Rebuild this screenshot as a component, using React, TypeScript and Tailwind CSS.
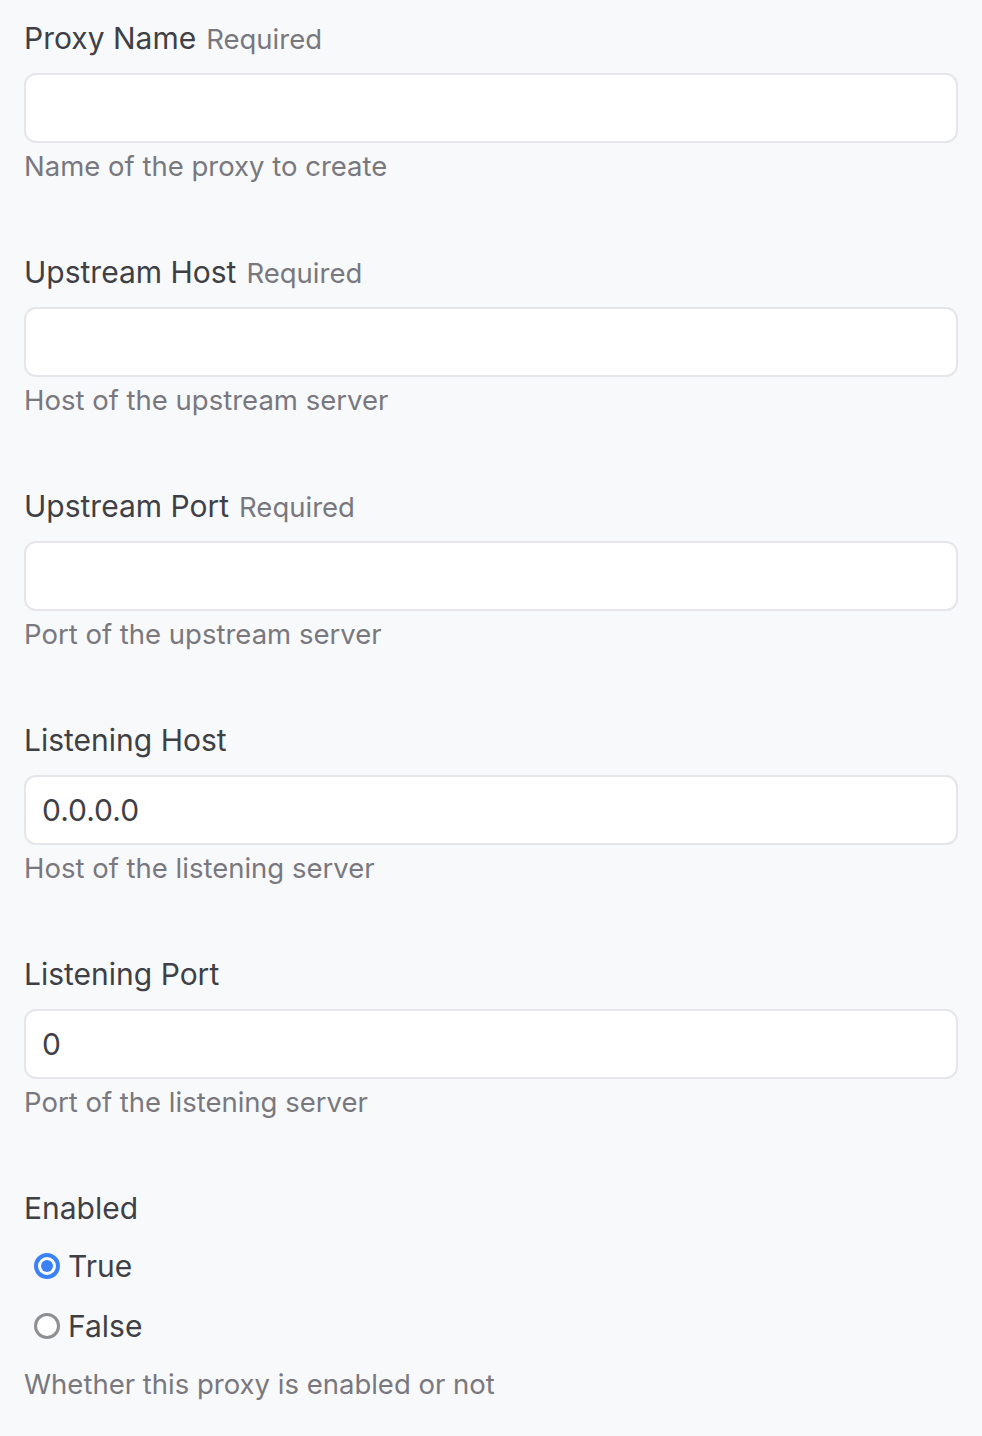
import React, { useState } from "react";

type Field = {
  label: string;
  required?: boolean;
  value: string;
  help: string;
};

const fields: Field[] = [
  { label: "Proxy Name", required: true, value: "", help: "Name of the proxy to create" },
  { label: "Upstream Host", required: true, value: "", help: "Host of the upstream server" },
  { label: "Upstream Port", required: true, value: "", help: "Port of the upstream server" },
  { label: "Listening Host", value: "0.0.0.0", help: "Host of the listening server" },
  { label: "Listening Port", value: "0", help: "Port of the listening server" },
];

const Radio = ({ checked, label, onClick }: { checked: boolean; label: string; onClick: () => void }) => (
  <label className="flex items-center h-[60px] pl-[10px] cursor-pointer" onClick={onClick}>
    <span
      className={
        checked
          ? "w-[26px] h-[26px] rounded-full border-[4px] border-[#3b82f6] bg-white flex items-center justify-center"
          : "w-[26px] h-[26px] rounded-full border-[3px] border-[#8e8e93] bg-white"
      }
    >
      {checked && <span className="w-[12px] h-[12px] rounded-full bg-[#3b82f6]" />}
    </span>
    <span className="ml-[8px] text-[30px] text-[#3f3f46]">{label}</span>
  </label>
);

export default function App() {
  const [values, setValues] = useState(fields.map((f) => f.value));
  const [enabled, setEnabled] = useState(true);

  return (
    <div
      className="min-h-[1436px] bg-[#f8f9fb] px-[24px] pt-[16px] text-[#3f3f46]"
      style={{ fontFamily: "Inter, 'Noto Sans', sans-serif" }}
    >
      <div className="w-[934px] flex flex-col gap-[66px]">
        {fields.map((f, i) => (
          <div key={f.label}>
            <div className="h-[44px] leading-[44px] mb-[13px] whitespace-nowrap">
              <span className="text-[30px]">{f.label}</span>
              {f.required && <span className="ml-[10px] text-[27.5px] text-[#78787e]">Required</span>}
            </div>
            <input
              className="w-full h-[70px] rounded-[12px] border-2 border-[#e5e5ea] bg-white px-[16px] text-[30px] text-[#3f3f46] outline-none"
              value={values[i]}
              onChange={(e) => {
                const next = [...values];
                next[i] = e.target.value;
                setValues(next);
              }}
            />
            <div className="mt-[5px] leading-[36px] text-[27.5px] text-[#78787e]">{f.help}</div>
          </div>
        ))}
        <div>
          <div className="h-[44px] leading-[44px] text-[30px] mb-[6px]">Enabled</div>
          <Radio checked={enabled} label="True" onClick={() => setEnabled(true)} />
          <Radio checked={!enabled} label="False" onClick={() => setEnabled(false)} />
          <div className="mt-[10px] leading-[36px] text-[27.5px] text-[#78787e]">Whether this proxy is enabled or not</div>
        </div>
      </div>
    </div>
  );
}
